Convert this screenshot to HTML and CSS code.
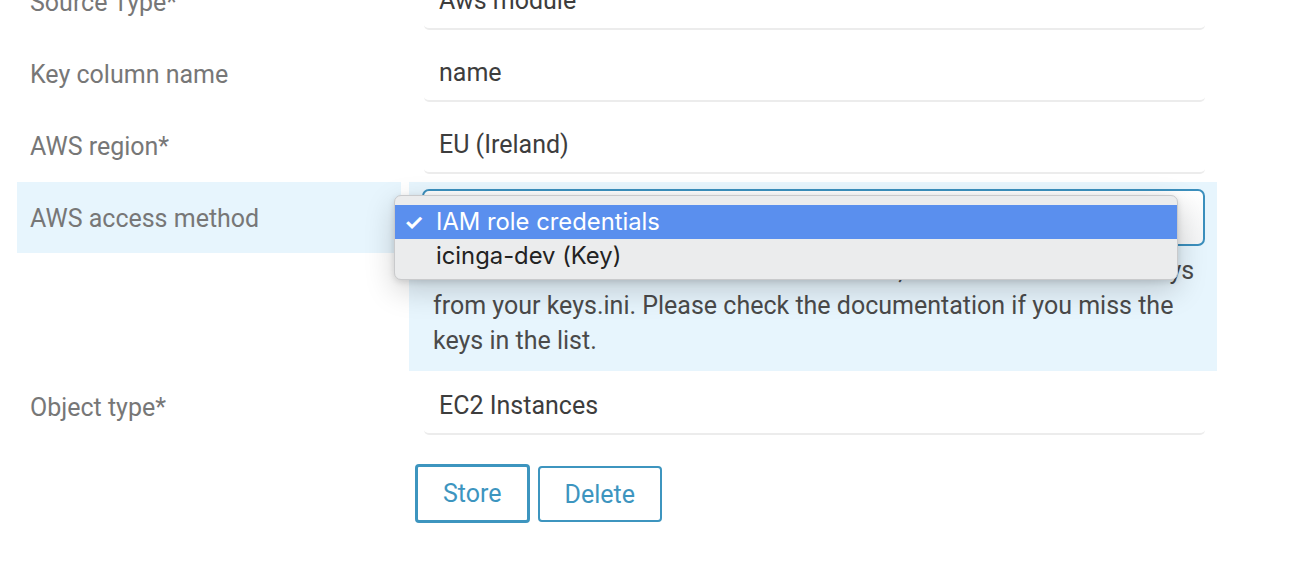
FILE: index.html
```html
<!DOCTYPE html>
<html lang="en">
<head>
<meta charset="utf-8">
<title>Import source</title>
<link rel="stylesheet" href="styles.css">
</head>
<body>
<form class="form">
  <div class="row">
    <div class="label">Source Type*</div>
    <div class="field"><div class="input">Aws module</div></div>
  </div>
  <div class="row">
    <div class="label">Key column name</div>
    <div class="field"><div class="input">name</div></div>
  </div>
  <div class="row">
    <div class="label">AWS region*</div>
    <div class="field"><div class="input">EU (Ireland)</div></div>
  </div>
  <div class="row active">
    <div class="label">AWS access method</div>
    <div class="field">
      <div class="select-wrap">
        <div class="select">IAM role credentials</div>
        <div class="menu">
          <div class="option selected"><span class="check">✓</span>IAM role credentials</div>
          <div class="option"><span class="check"></span>icinga-dev (Key)</div>
        </div>
      </div>
      <p class="desc">Use the IAM role credentials on EC2 hosts, or choose one of the keys<br>from your keys.ini. Please check the documentation if you miss the<br>keys in the list.</p>
    </div>
  </div>
  <div class="row">
    <div class="label">Object type*</div>
    <div class="field"><div class="input">EC2 Instances</div></div>
  </div>
  <div class="row buttons">
    <div class="label"></div>
    <div class="field actions">
      <button type="button" class="btn focused">Store</button>
      <button type="button" class="btn">Delete</button>
    </div>
  </div>
</form>
</body>
</html>
```

FILE: styles.css
```css
* { box-sizing: border-box; }

html, body {
  margin: 0;
  padding: 0;
  background: #fff;
  height: 100%;
  overflow: hidden;
}

body {
  font-family: Roboto, "Liberation Sans", sans-serif;
  font-size: 25px;
  color: #444;
}

.form {
  margin: -34px 0 0 17px;
  width: 1200px;
}

.row {
  display: flex;
  gap: 8px;
  align-items: flex-start;
}

.label {
  width: 384px;
  flex: none;
  height: 71px;
  padding: 8px 0 0 13px;
  line-height: 57px;
  color: #777;
}

.field {
  flex: 1;
  min-height: 72px;
  padding: 7px 12px 0 15px;
}

.input {
  height: 57px;
  line-height: 56px;
  padding-left: 15px;
  color: #3d3d3d;
  border-bottom: 2px solid #ececec;
  border-radius: 5px;
}

.row.active .label,
.row.active .field {
  background: #e7f5fd;
}

.select-wrap {
  position: relative;
}

.select {
  height: 57px;
  line-height: 53px;
  padding-left: 15px;
  margin-left: -2px;
  color: #3a3a3a;
  border: 2px solid #3b8fbd;
  border-radius: 7px;
  background: linear-gradient(#ffffff, #f4f5f6);
}

.menu {
  position: absolute;
  left: -30px;
  top: 6px;
  width: 784px;
  height: 85px;
  padding-top: 9px;
  background: #ebeced;
  border: 1px solid #c9cacc;
  border-radius: 7px;
  box-shadow: 0 10px 30px rgba(0, 0, 0, 0.18), 0 2px 6px rgba(0, 0, 0, 0.12);
  font-family: Inter, "Open Sans", sans-serif;
  font-size: 23.8px;
  color: #222;
  z-index: 2;
}

.option {
  height: 34px;
  line-height: 34px;
  display: flex;
  align-items: center;
}

.option.selected {
  background: #5a8fee;
  color: #fff;
}

.check {
  width: 41px;
  padding-left: 9px;
  font-size: 22px;
  font-weight: 700;
}

.desc {
  margin: 7px 0 0;
  padding: 0 0 13px 9px;
  line-height: 35px;
  color: #4a4a4a;
  white-space: nowrap;
}

.actions {
  display: flex;
  align-items: center;
  gap: 8px;
  padding: 22px 0 0 6px;
}

.btn {
  font-family: Roboto, "Liberation Sans", sans-serif;
  font-size: 25px;
  color: #3d95bf;
  background: #fff;
  border: 2px solid #3d95bf;
  border-radius: 4px;
  height: 56px;
  padding: 0 25px;
  cursor: pointer;
}

.btn.focused {
  border-width: 3px;
  height: 59px;
  padding: 0 25px;
  margin-top: -1px;
}
```
